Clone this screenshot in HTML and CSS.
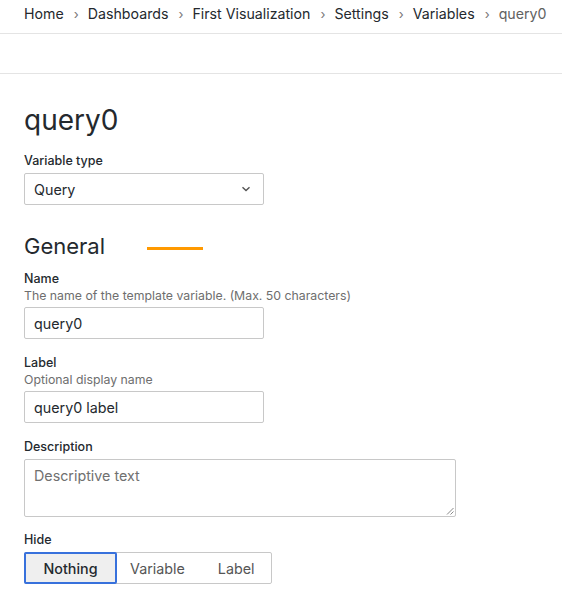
FILE: index.html
```html
<!DOCTYPE html>
<html>
<head>
<meta charset="utf-8">
<link rel="stylesheet" href="styles.css">
</head>
<body>
<nav class="crumbs">
  <span class="crumb">Home</span><span class="sep">›</span>
  <span class="crumb">Dashboards</span><span class="sep">›</span>
  <span class="crumb">First Visualization</span><span class="sep">›</span>
  <span class="crumb">Settings</span><span class="sep">›</span>
  <span class="crumb">Variables</span><span class="sep">›</span>
  <span class="crumb current">query0</span>
</nav>
<div class="toolbar"></div>
<main class="content">
  <h1 class="title">query0</h1>
  <div class="field first">
    <div class="label">Variable type</div>
    <div class="select">
      <span>Query</span>
      <svg class="chev" width="10" height="6" viewBox="0 0 10 6"><path d="M1.5 1.2 L5 4.6 L8.5 1.2" fill="none" stroke="#555" stroke-width="1.4"/></svg>
    </div>
  </div>
  <div class="section">
    <h2 class="subtitle">General</h2>
    <span class="accent"></span>
  </div>
  <div class="field">
    <div class="label">Name</div>
    <div class="desc">The name of the template variable. (Max. 50 characters)</div>
    <div class="input">query0</div>
  </div>
  <div class="field">
    <div class="label">Label</div>
    <div class="desc">Optional display name</div>
    <div class="input">query0 label</div>
  </div>
  <div class="field descfield">
    <div class="label">Description</div>
    <div class="textarea"><span class="placeholder">Descriptive text</span>
      <svg class="grip" width="8" height="8" viewBox="0 0 8 8"><path d="M7.5 1 L1 7.5 M7.5 4.5 L4.5 7.5" stroke="#888" stroke-width="1"/></svg>
    </div>
  </div>
  <div class="field last">
    <div class="label">Hide</div>
    <div class="radios">
      <span class="radio active">Nothing</span>
      <span class="radio mid">Variable</span>
      <span class="radio end">Label</span>
    </div>
  </div>
</main>
</body>
</html>
```
FILE: styles.css
```css
* { box-sizing: border-box; }
body {
  margin: 0;
  font-family: Inter, "Noto Sans", sans-serif;
  color: #24292e;
  background: #fff;
}
.crumbs {
  height: 34px;
  display: flex;
  align-items: center;
  padding: 0 0 6px 24px;
  border-bottom: 1px solid #e4e4e4;
  font-size: 14.2px;
  white-space: nowrap;
}
.crumb { color: #24292e; }
.crumb.current { color: #616161; }
.sep { color: #777; font-size: 13px; margin: 0 9px 0 10px; }
.toolbar {
  height: 40px;
  border-bottom: 1px solid #e4e4e4;
}
.content { padding: 0 24px; }
.title {
  margin: 28px 0 0;
  font-size: 28px;
  font-weight: 400;
  line-height: 36px;
}
.field { margin-top: 15px; }
.field.first { margin-top: 14px; }
.field.descfield { margin-top: 15px; }
.field.last { margin-top: 14px; }
.label {
  font-size: 12.5px;
  font-weight: 500;
  line-height: 18px;
  margin-bottom: 3px;
}
.desc {
  font-size: 12.3px;
  color: #6e6e6e;
  line-height: 16px;
  margin-top: -3px;
  margin-bottom: 3px;
}
.select, .input {
  width: 240px;
  height: 32px;
  border: 1px solid #c8c8c8;
  border-radius: 2px;
  display: flex;
  align-items: center;
  padding: 0 9px;
  font-size: 14.3px;
}
.select { justify-content: space-between; padding-right: 12px; }
.section {
  display: flex;
  align-items: center;
  margin-top: 26px;
  height: 30px;
}
.subtitle {
  margin: 0;
  font-size: 22px;
  font-weight: 400;
}
.accent {
  width: 56px;
  height: 3px;
  background: #ff9900;
  margin-left: 42px;
  margin-top: 4px;
}
.section + .field { margin-top: 9px; }
.textarea {
  position: relative;
  width: 432px;
  height: 58px;
  border: 1px solid #c8c8c8;
  border-radius: 2px;
  padding: 7px 9px;
  font-size: 14.3px;
}
.placeholder { color: #707070; }
.grip { position: absolute; right: 1px; bottom: 1px; }
.radios {
  display: inline-flex;
  height: 32px;
  border: 1px solid #c8c8c8;
  border-radius: 2px;
  font-size: 14.3px;
}
.radio {
  display: flex;
  align-items: center;
  color: #555;
}
.radio.mid { padding: 0 16px 0 13px; }
.radio.end { padding: 0 16px 0 17px; }
.radio.active {
  width: 93px;
  justify-content: center;
  margin: -1px 0 -1px -1px;
  border: 2px solid #3871dc;
  border-radius: 2px;
  background: #efefef;
  color: #24292e;
  font-weight: 500;
}
```
